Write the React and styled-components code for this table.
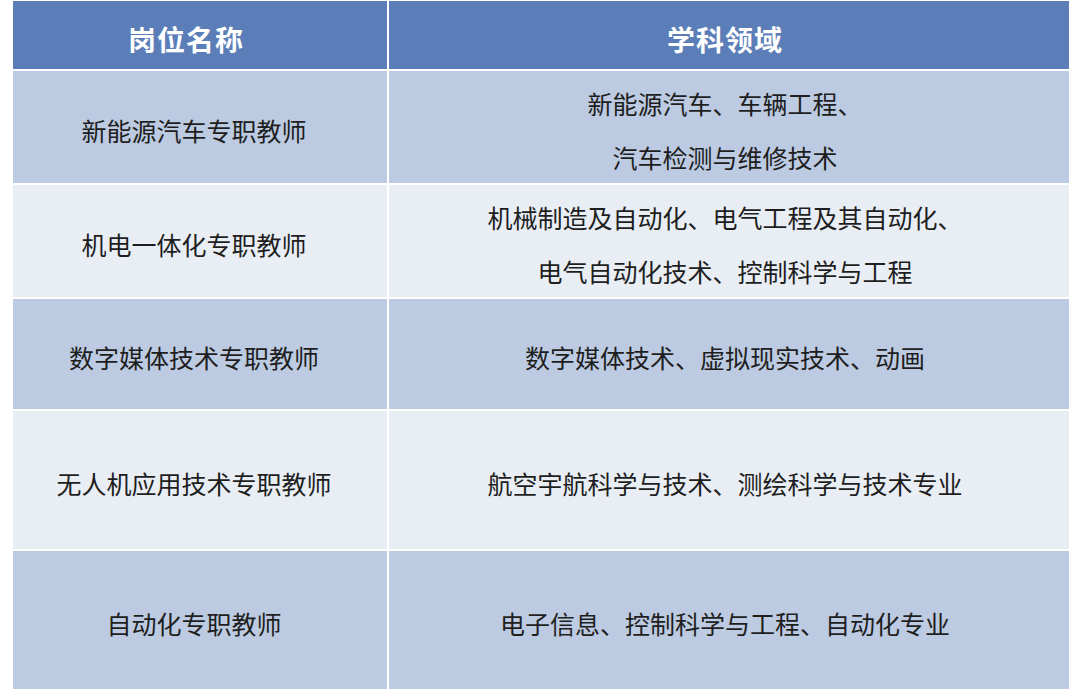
import React from "react";
import styled, { createGlobalStyle } from "styled-components";

const GlobalStyle = createGlobalStyle`
	html, body {
		margin: 0;
		padding: 0;
		background: #ffffff;
	}
	body {
		font-family: "Noto Sans CJK SC", "Noto Sans", sans-serif;
	}
`;

const rows = [
	{ title: "新能源汽车专职教师", fields: ["新能源汽车、车辆工程、", "汽车检测与维修技术"], height: 112, tone: "dark" },
	{ title: "机电一体化专职教师", fields: ["机械制造及自动化、电气工程及其自动化、", "电气自动化技术、控制科学与工程"], height: 112, tone: "light" },
	{ title: "数字媒体技术专职教师", fields: ["数字媒体技术、虚拟现实技术、动画"], height: 110, tone: "dark" },
	{ title: "无人机应用技术专职教师", fields: ["航空宇航科学与技术、测绘科学与技术专业"], height: 138, tone: "light" },
	{ title: "自动化专职教师", fields: ["电子信息、控制科学与工程、自动化专业"], height: 138, tone: "dark" },
];

const App = () => {
	return (
		<>
			<GlobalStyle />
			<Page>
				<Table $rows={rows.map((r) => r.height + "px").join(" ")}>
					<HeadCell $shift={28}>岗位名称</HeadCell>
					<HeadCell $shift={8}>学科领域</HeadCell>
					{rows.map((row) => (
						<React.Fragment key={row.title}>
							<Cell $tone={row.tone} $shift={12}>
								<Line>{row.title}</Line>
							</Cell>
							<Cell $tone={row.tone} $shift={8}>
								{row.fields.map((f) => (
									<Line key={f}>{f}</Line>
								))}
							</Cell>
						</React.Fragment>
					))}
				</Table>
			</Page>
		</>
	);
};

const Page = styled.div`
	width: 1080px;
	height: 696px;
	padding: 1px 0 0 13px;
	box-sizing: border-box;
	background: #ffffff;
`;

const Table = styled.div`
	display: grid;
	grid-template-columns: 374px 680px;
	grid-template-rows: 68px ${(p) => p.$rows};
	gap: 2px;
	width: 1056px;
	background: #ffffff;
`;

const HeadCell = styled.div`
	display: flex;
	align-items: center;
	justify-content: center;
	padding: 8px ${(p) => p.$shift}px 0 0;
	box-sizing: border-box;
	background: #5b7eb8;
	color: #ffffff;
	font-size: 28px;
	font-weight: 700;
	letter-spacing: 1px;
`;

const Cell = styled.div`
	display: flex;
	flex-direction: column;
	align-items: center;
	justify-content: center;
	padding: 6px ${(p) => p.$shift}px 0 0;
	box-sizing: border-box;
	background: ${(p) => (p.$tone === "dark" ? "#bccbe1" : "#e9eef5")};
	color: #1e1e1e;
	font-size: 25px;
`;

const Line = styled.div`
	line-height: 54px;
	white-space: nowrap;
`;

export default App;
